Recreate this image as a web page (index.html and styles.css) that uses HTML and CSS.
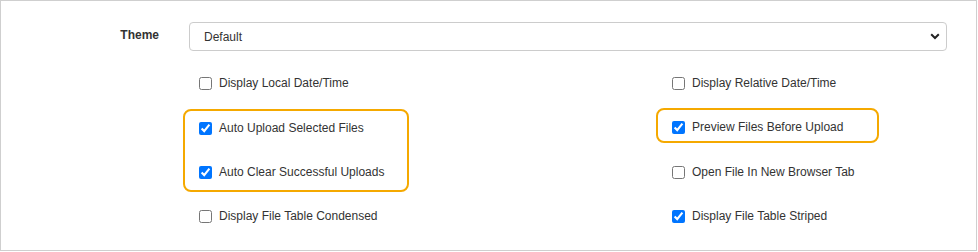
FILE: index.html
```html
<!DOCTYPE html>
<html lang="en">
<head>
	<meta charset="UTF-8">
	<title>Settings</title>
	<link rel="stylesheet" href="styles.css">
</head>
<body>
	<div class="panel">
		<div class="theme-row">
			<label class="label" for="theme">Theme</label>
			<div class="select-wrap">
				<select id="theme" class="select">
					<option>Default</option>
				</select>
				<svg class="chevron" width="10" height="7" viewBox="0 0 10 7"><path d="M1.2 1.3 5 5 8.8 1.3" fill="none" stroke="#222" stroke-width="2"/></svg>
			</div>
		</div>

		<div class="options">
			<div class="col col-left">
				<label class="opt"><input type="checkbox">Display Local Date/Time</label>
				<div class="hl hl-left">
					<label class="opt"><input type="checkbox" checked>Auto Upload Selected Files</label>
					<label class="opt opt-b"><input type="checkbox" checked>Auto Clear Successful Uploads</label>
				</div>
				<label class="opt opt-last"><input type="checkbox">Display File Table Condensed</label>
			</div>
			<div class="col col-right">
				<label class="opt"><input type="checkbox">Display Relative Date/Time</label>
				<div class="hl hl-right">
					<label class="opt"><input type="checkbox" checked>Preview Files Before Upload</label>
				</div>
				<label class="opt opt-tab"><input type="checkbox">Open File In New Browser Tab</label>
				<label class="opt opt-striped"><input type="checkbox" checked>Display File Table Striped</label>
			</div>
		</div>
	</div>
</body>
</html>
```

FILE: styles.css
```css
body {
	margin: 0;
	font-family: "Liberation Sans", Arial, sans-serif;
	font-size: 12px;
	color: #333;
	background: #fff;
}
.panel {
	width: 977px;
	height: 251px;
	border: 1px solid #cfcfcf;
	padding-top: 21px;
	box-sizing: border-box;
}
.theme-row {
	display: grid;
	grid-template-columns: 158px 758px;
	column-gap: 30px;
	align-items: center;
}
.label {
	text-align: right;
	font-weight: bold;
	color: #333;
	padding-bottom: 3px;
}
.select-wrap {
	position: relative;
}
.select {
	appearance: none;
	-webkit-appearance: none;
	width: 100%;
	height: 29px;
	border: 1px solid #ccc;
	border-radius: 4px;
	background: #fff;
	padding: 0 0 0 14px;
	font-family: inherit;
	font-size: 12px;
	color: #333;
}
.chevron {
	position: absolute;
	right: 7px;
	top: 11px;
}
.options {
	display: flex;
	margin-top: 10px;
	margin-left: 182px;
}
.col {
	display: flex;
	flex-direction: column;
	align-items: flex-start;
}
.col-left {
	width: 473px;
}
.opt {
	display: flex;
	align-items: center;
	height: 24px;
	padding-left: 16px;
	white-space: nowrap;
}
.col > .opt:first-child {
	height: 44px;
}
.opt input {
	margin: 0 7px 0 0;
	width: 13px;
	height: 13px;
}
.hl {
	border: 2px solid #f5a900;
	border-radius: 8px;
	padding-left: 14px;
	box-sizing: border-box;
}
.hl .opt {
	padding-left: 0;
}
.hl-left {
	width: 226px;
	height: 83px;
	margin-top: 4px;
	padding-top: 5px;
}
.opt-b {
	margin-top: 20px;
}
.opt-last {
	margin-top: 12px;
}
.hl-right {
	width: 223px;
	height: 35px;
	margin-top: 3px;
	padding-top: 5px;
}
.opt-tab {
	margin-top: 17px;
}
.opt-striped {
	margin-top: 20px;
}
```
